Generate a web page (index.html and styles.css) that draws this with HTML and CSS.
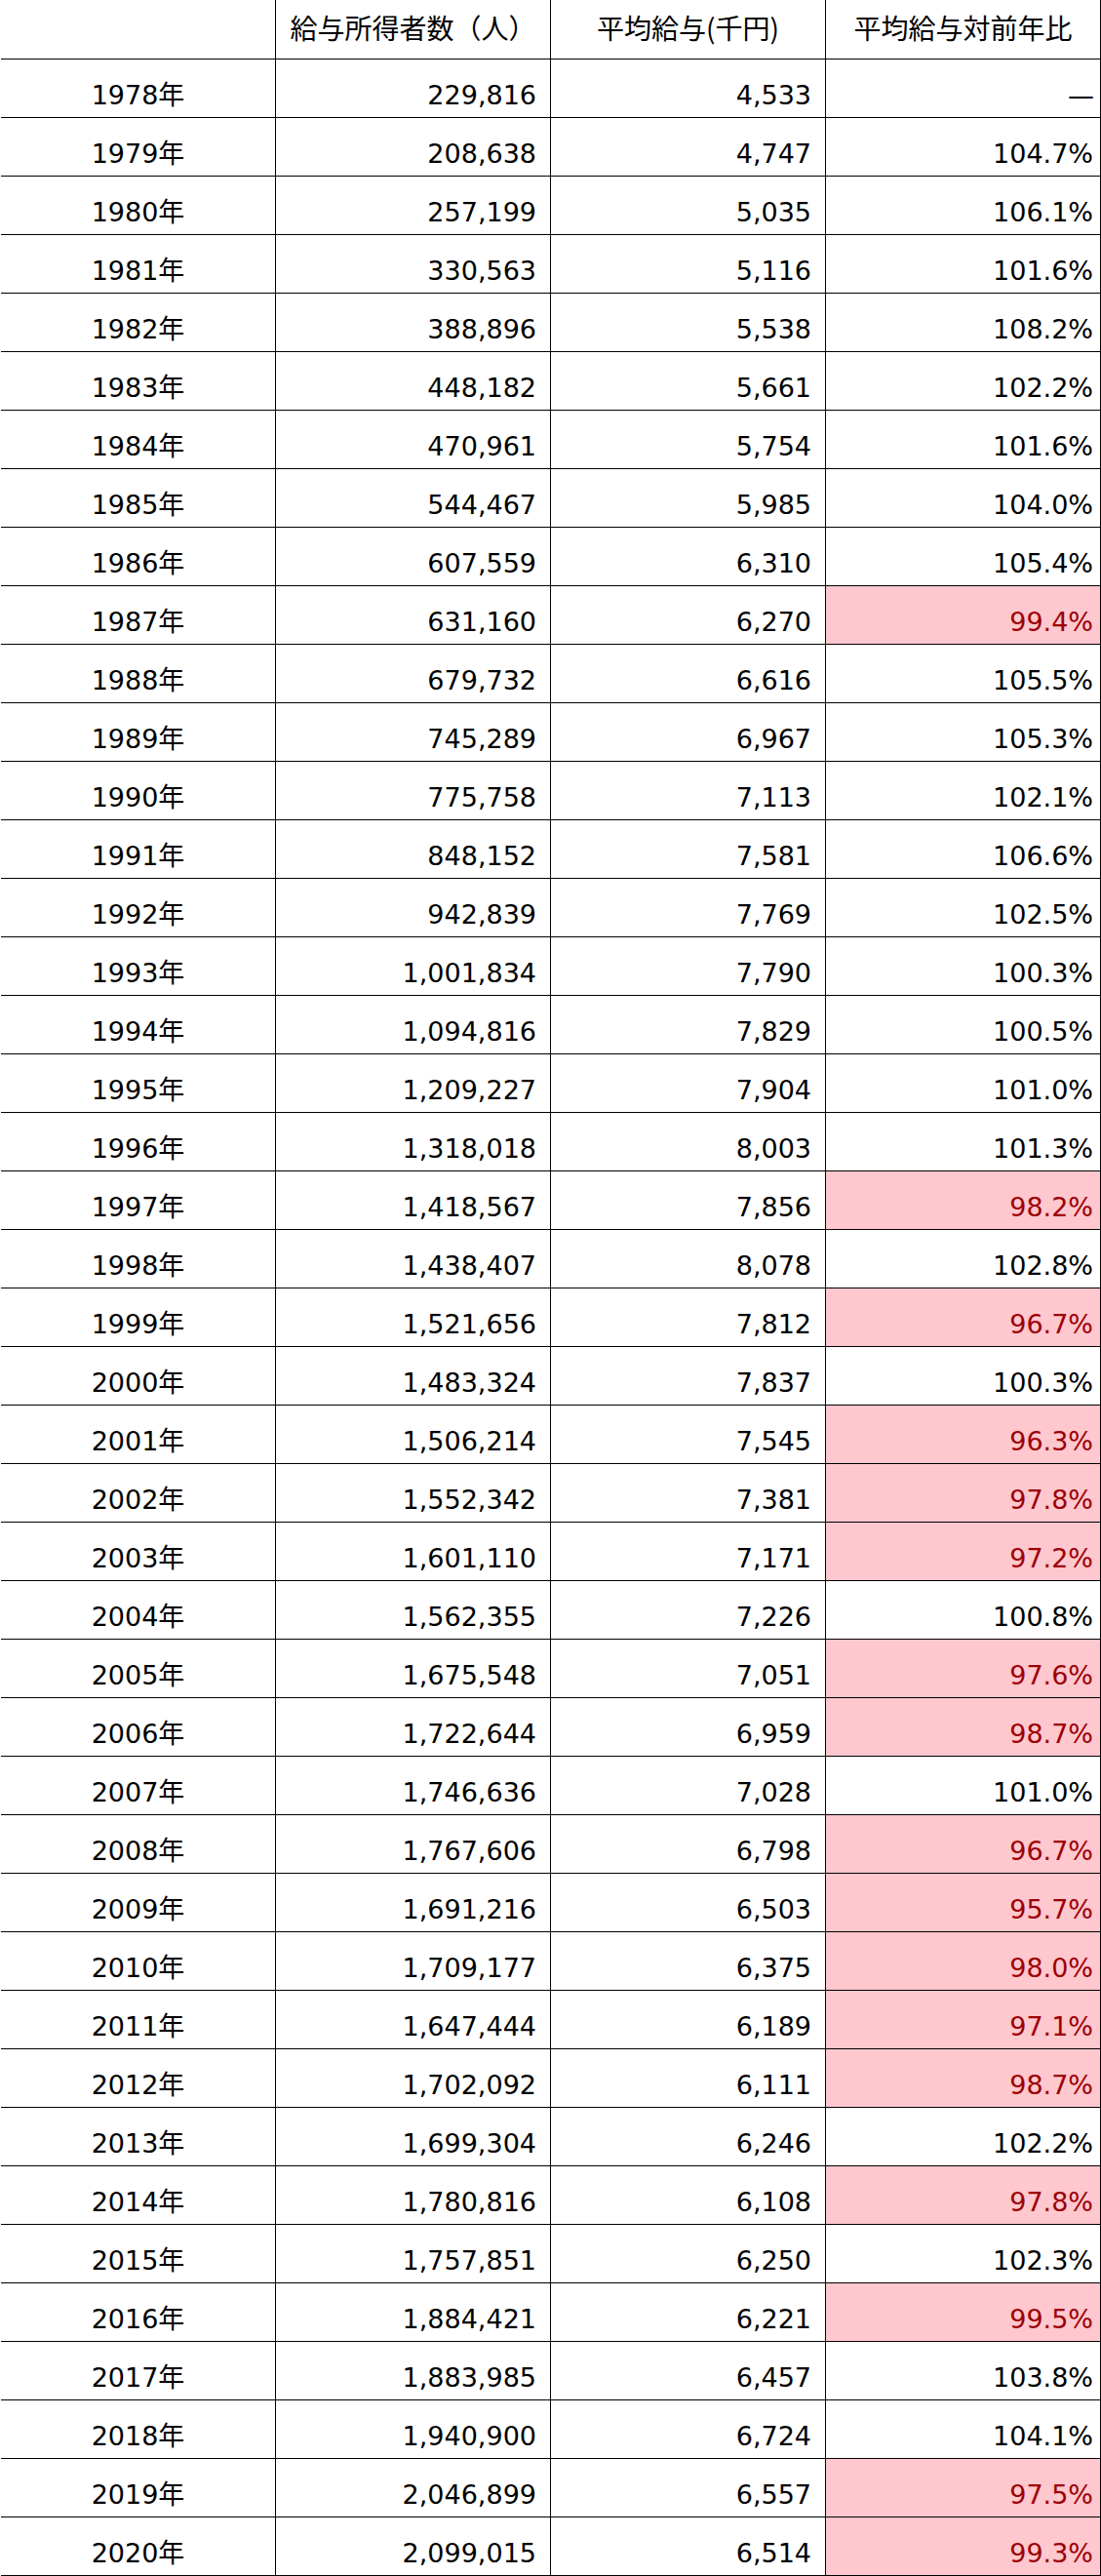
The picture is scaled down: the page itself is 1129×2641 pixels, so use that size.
FILE: index.html
```html
<!DOCTYPE html>
<html lang="ja">
<head>
<meta charset="utf-8">
<title>給与所得者数と平均給与</title>
<link rel="stylesheet" href="styles.css">
</head>
<body>
<table class="data">
<colgroup><col class="c"><col class="c"><col class="c"><col class="c"></colgroup>
<thead>
<tr><th></th><th>給与所得者数（人）</th><th>平均給与(千円)</th><th>平均給与対前年比</th></tr>
</thead>
<tbody>
<tr><td class="yr">1978年</td><td>229,816</td><td>4,533</td><td class="pct dash">—</td></tr>
<tr><td class="yr">1979年</td><td>208,638</td><td>4,747</td><td class="pct">104.7%</td></tr>
<tr><td class="yr">1980年</td><td>257,199</td><td>5,035</td><td class="pct">106.1%</td></tr>
<tr><td class="yr">1981年</td><td>330,563</td><td>5,116</td><td class="pct">101.6%</td></tr>
<tr><td class="yr">1982年</td><td>388,896</td><td>5,538</td><td class="pct">108.2%</td></tr>
<tr><td class="yr">1983年</td><td>448,182</td><td>5,661</td><td class="pct">102.2%</td></tr>
<tr><td class="yr">1984年</td><td>470,961</td><td>5,754</td><td class="pct">101.6%</td></tr>
<tr><td class="yr">1985年</td><td>544,467</td><td>5,985</td><td class="pct">104.0%</td></tr>
<tr><td class="yr">1986年</td><td>607,559</td><td>6,310</td><td class="pct">105.4%</td></tr>
<tr><td class="yr">1987年</td><td>631,160</td><td>6,270</td><td class="pct neg">99.4%</td></tr>
<tr><td class="yr">1988年</td><td>679,732</td><td>6,616</td><td class="pct">105.5%</td></tr>
<tr><td class="yr">1989年</td><td>745,289</td><td>6,967</td><td class="pct">105.3%</td></tr>
<tr><td class="yr">1990年</td><td>775,758</td><td>7,113</td><td class="pct">102.1%</td></tr>
<tr><td class="yr">1991年</td><td>848,152</td><td>7,581</td><td class="pct">106.6%</td></tr>
<tr><td class="yr">1992年</td><td>942,839</td><td>7,769</td><td class="pct">102.5%</td></tr>
<tr><td class="yr">1993年</td><td>1,001,834</td><td>7,790</td><td class="pct">100.3%</td></tr>
<tr><td class="yr">1994年</td><td>1,094,816</td><td>7,829</td><td class="pct">100.5%</td></tr>
<tr><td class="yr">1995年</td><td>1,209,227</td><td>7,904</td><td class="pct">101.0%</td></tr>
<tr><td class="yr">1996年</td><td>1,318,018</td><td>8,003</td><td class="pct">101.3%</td></tr>
<tr><td class="yr">1997年</td><td>1,418,567</td><td>7,856</td><td class="pct neg">98.2%</td></tr>
<tr><td class="yr">1998年</td><td>1,438,407</td><td>8,078</td><td class="pct">102.8%</td></tr>
<tr><td class="yr">1999年</td><td>1,521,656</td><td>7,812</td><td class="pct neg">96.7%</td></tr>
<tr><td class="yr">2000年</td><td>1,483,324</td><td>7,837</td><td class="pct">100.3%</td></tr>
<tr><td class="yr">2001年</td><td>1,506,214</td><td>7,545</td><td class="pct neg">96.3%</td></tr>
<tr><td class="yr">2002年</td><td>1,552,342</td><td>7,381</td><td class="pct neg">97.8%</td></tr>
<tr><td class="yr">2003年</td><td>1,601,110</td><td>7,171</td><td class="pct neg">97.2%</td></tr>
<tr><td class="yr">2004年</td><td>1,562,355</td><td>7,226</td><td class="pct">100.8%</td></tr>
<tr><td class="yr">2005年</td><td>1,675,548</td><td>7,051</td><td class="pct neg">97.6%</td></tr>
<tr><td class="yr">2006年</td><td>1,722,644</td><td>6,959</td><td class="pct neg">98.7%</td></tr>
<tr><td class="yr">2007年</td><td>1,746,636</td><td>7,028</td><td class="pct">101.0%</td></tr>
<tr><td class="yr">2008年</td><td>1,767,606</td><td>6,798</td><td class="pct neg">96.7%</td></tr>
<tr><td class="yr">2009年</td><td>1,691,216</td><td>6,503</td><td class="pct neg">95.7%</td></tr>
<tr><td class="yr">2010年</td><td>1,709,177</td><td>6,375</td><td class="pct neg">98.0%</td></tr>
<tr><td class="yr">2011年</td><td>1,647,444</td><td>6,189</td><td class="pct neg">97.1%</td></tr>
<tr><td class="yr">2012年</td><td>1,702,092</td><td>6,111</td><td class="pct neg">98.7%</td></tr>
<tr><td class="yr">2013年</td><td>1,699,304</td><td>6,246</td><td class="pct">102.2%</td></tr>
<tr><td class="yr">2014年</td><td>1,780,816</td><td>6,108</td><td class="pct neg">97.8%</td></tr>
<tr><td class="yr">2015年</td><td>1,757,851</td><td>6,250</td><td class="pct">102.3%</td></tr>
<tr><td class="yr">2016年</td><td>1,884,421</td><td>6,221</td><td class="pct neg">99.5%</td></tr>
<tr><td class="yr">2017年</td><td>1,883,985</td><td>6,457</td><td class="pct">103.8%</td></tr>
<tr><td class="yr">2018年</td><td>1,940,900</td><td>6,724</td><td class="pct">104.1%</td></tr>
<tr><td class="yr">2019年</td><td>2,046,899</td><td>6,557</td><td class="pct neg">97.5%</td></tr>
<tr><td class="yr">2020年</td><td>2,099,015</td><td>6,514</td><td class="pct neg">99.3%</td></tr>
</tbody>
</table>
</body>
</html>
```

FILE: styles.css
```css
html, body {
  margin: 0;
  padding: 0;
  background: #ffffff;
}

body {
  font-family: "DejaVu Sans", "Noto Sans CJK JP", sans-serif;
  font-size: 27px;
  color: #000000;
}

.data {
  margin-left: 1px;
  width: 1128px;
  table-layout: fixed;
  border-collapse: separate;
  border-spacing: 0;
}

.data .c {
  width: 282px;
}

.data th,
.data td {
  box-sizing: border-box;
  border-right: 1px solid #000000;
  border-bottom: 1px solid #000000;
  white-space: nowrap;
}

.data th {
  height: 61px;
  padding: 0 0 3px;
  font-weight: normal;
  font-size: 28px;
  text-align: center;
  vertical-align: middle;
  font-family: "Noto Sans CJK JP", "DejaVu Sans", sans-serif;
  line-height: 1.2;
}

.data td {
  height: 60px;
  padding: 0 14px 6px 14px;
  text-align: right;
  vertical-align: bottom;
  line-height: 1.2;
}

.data td.yr {
  text-align: center;
  padding-left: 0;
  padding-right: 0;
}

.data td.pct {
  padding-right: 7px;
}

.data td.neg {
  background: #ffc7ce;
  color: #9c0006;
}

.data td.dash {
  padding-right: 6px;
}
```
